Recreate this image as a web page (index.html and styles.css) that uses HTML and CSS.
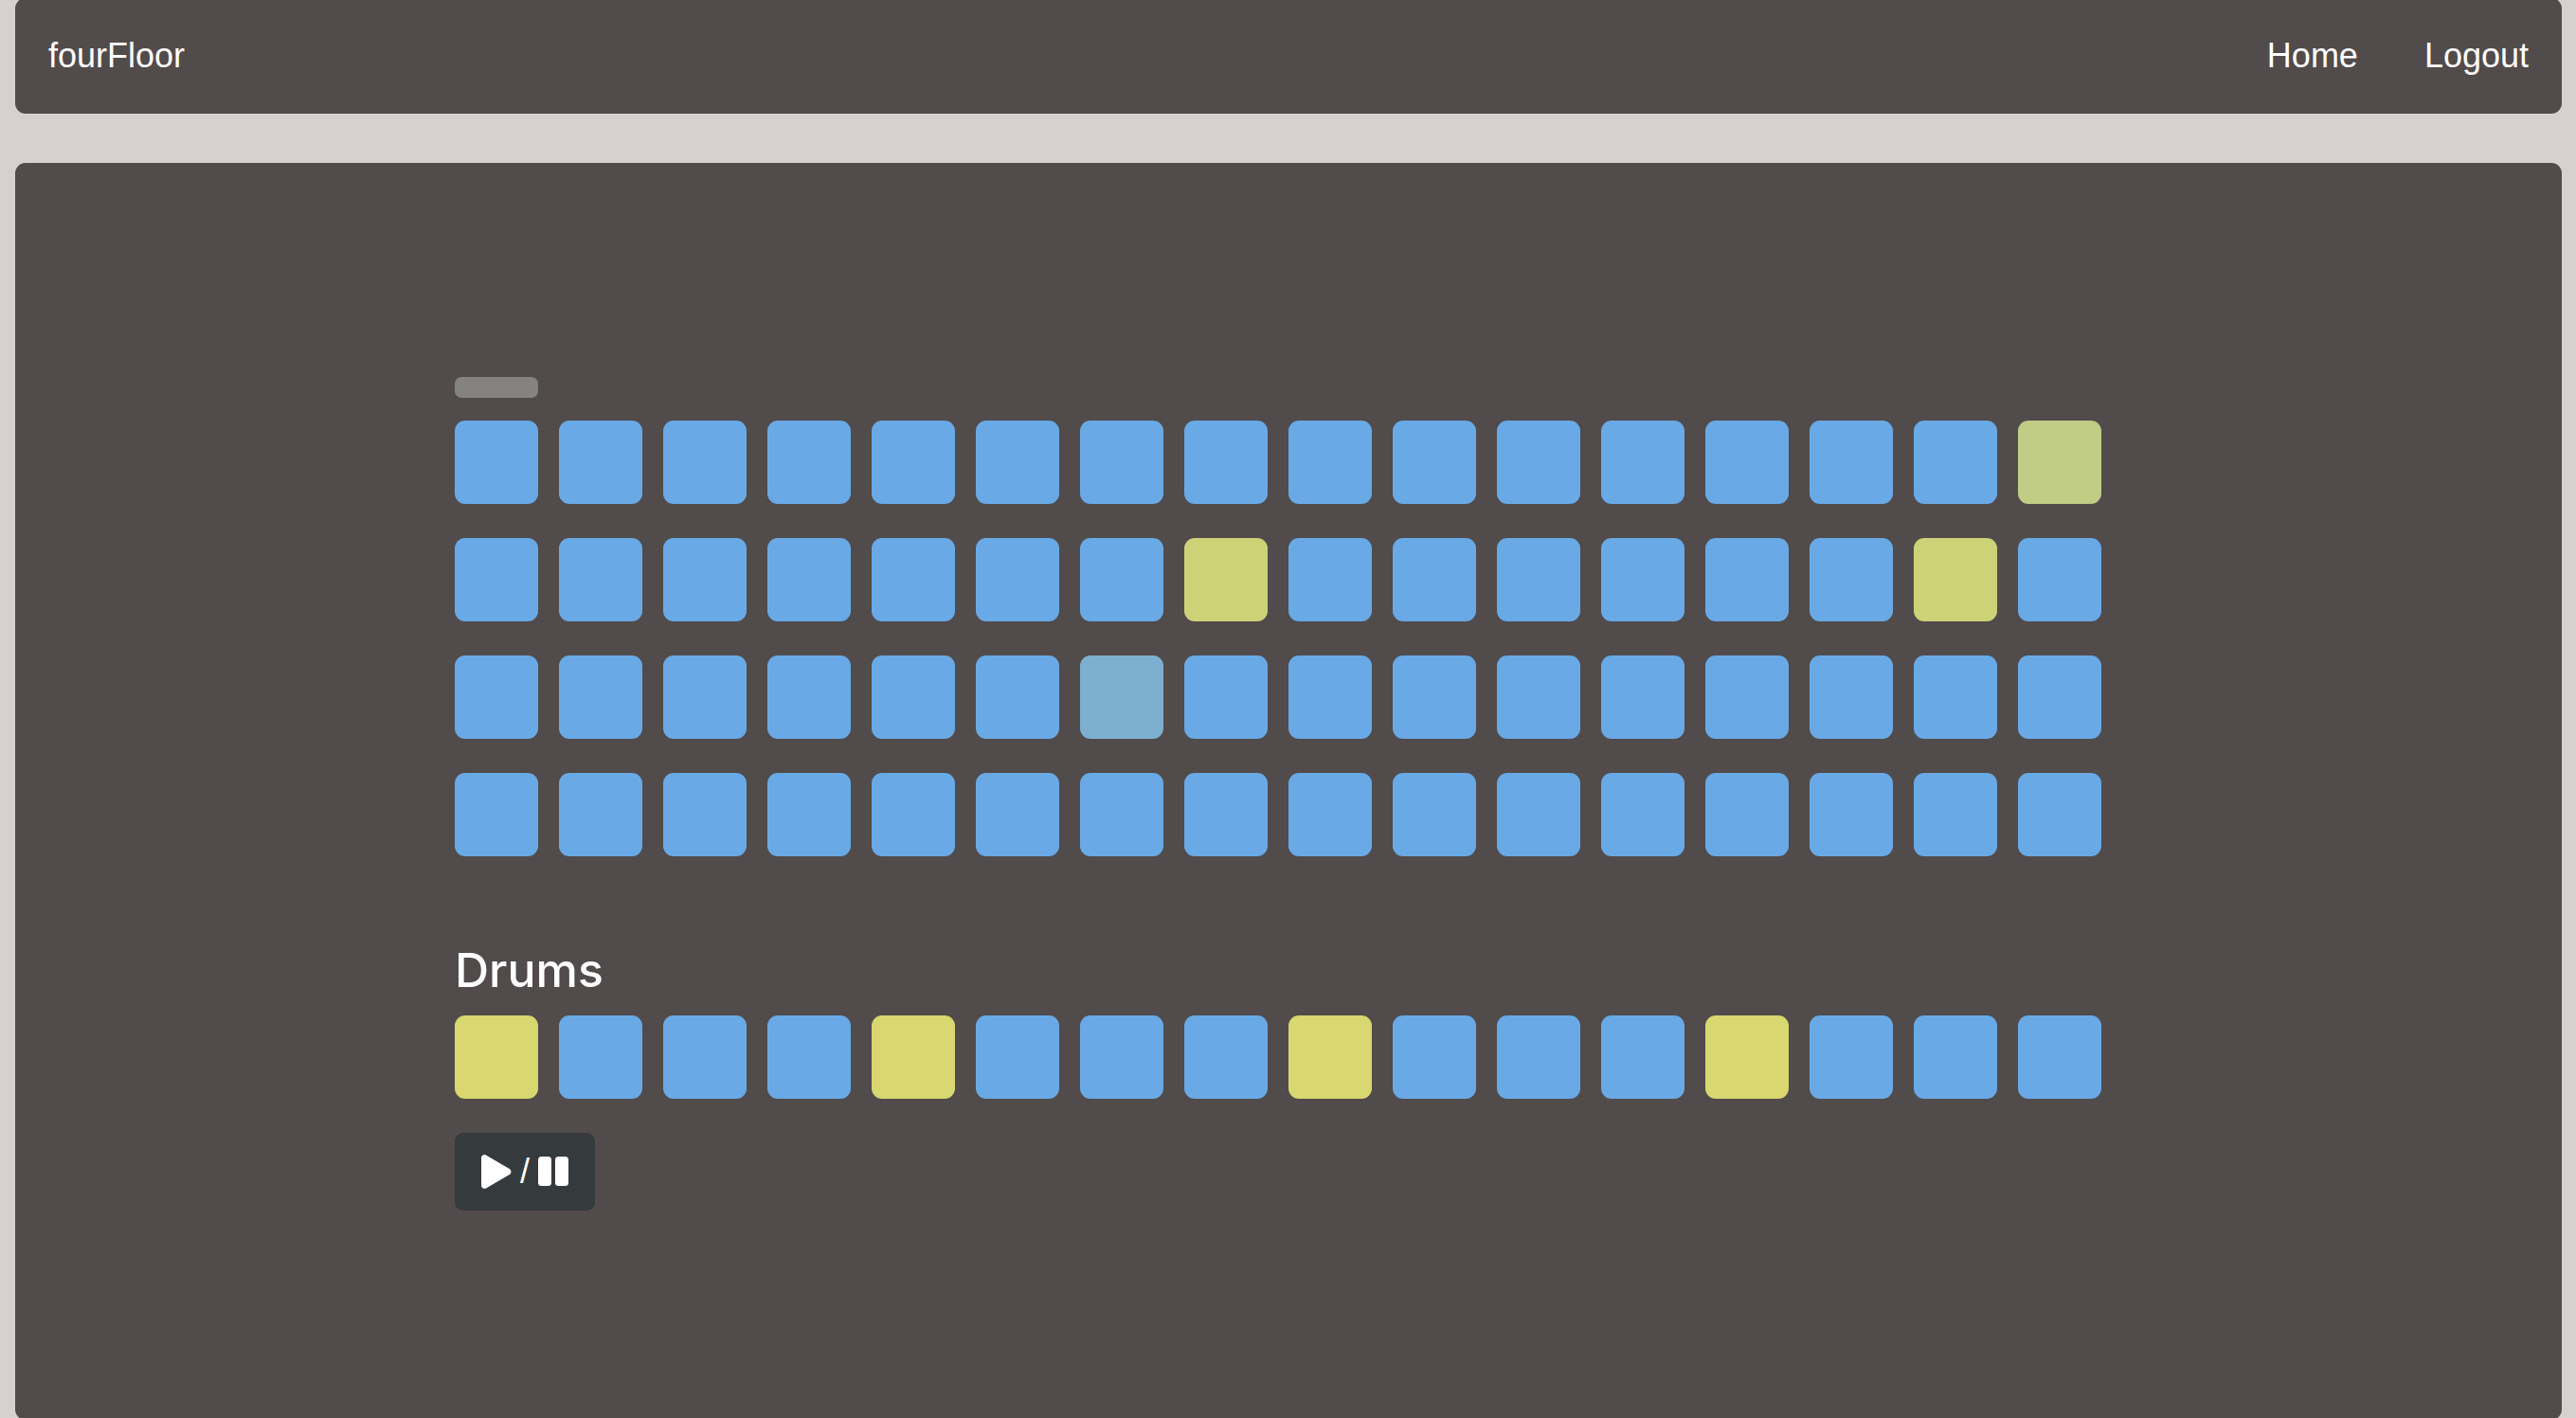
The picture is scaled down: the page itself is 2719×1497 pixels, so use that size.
FILE: index.html
```html
<!DOCTYPE html>
<html lang="en">
<head>
<meta charset="utf-8">
<meta name="viewport" content="width=device-width, initial-scale=1">
<title>fourFloor</title>
<link rel="stylesheet" href="styles.css">
</head>
<body>
<div class="page">
  <nav class="navbar">
    <a class="navbar-link" href="#">fourFloor</a>
    <div class="navbar-menu">
      <a class="navbar-link" href="#">Home</a>
      <a class="navbar-link" href="#">Logout</a>
    </div>
  </nav>
  <main class="panel">
    <div class="sequencer">
      <div class="row playhead"><span class="playhead-mark"></span></div>
      <div class="tracks">
        <div class="row" role="group" aria-label="Track 1">
          <button class="pad" aria-label="Step 1"></button>
          <button class="pad" aria-label="Step 2"></button>
          <button class="pad" aria-label="Step 3"></button>
          <button class="pad" aria-label="Step 4"></button>
          <button class="pad" aria-label="Step 5"></button>
          <button class="pad" aria-label="Step 6"></button>
          <button class="pad" aria-label="Step 7"></button>
          <button class="pad" aria-label="Step 8"></button>
          <button class="pad" aria-label="Step 9"></button>
          <button class="pad" aria-label="Step 10"></button>
          <button class="pad" aria-label="Step 11"></button>
          <button class="pad" aria-label="Step 12"></button>
          <button class="pad" aria-label="Step 13"></button>
          <button class="pad" aria-label="Step 14"></button>
          <button class="pad" aria-label="Step 15"></button>
          <button class="pad level-2" aria-label="Step 16" aria-pressed="true"></button>
        </div>
        <div class="row" role="group" aria-label="Track 2">
          <button class="pad" aria-label="Step 1"></button>
          <button class="pad" aria-label="Step 2"></button>
          <button class="pad" aria-label="Step 3"></button>
          <button class="pad" aria-label="Step 4"></button>
          <button class="pad" aria-label="Step 5"></button>
          <button class="pad" aria-label="Step 6"></button>
          <button class="pad" aria-label="Step 7"></button>
          <button class="pad level-3" aria-label="Step 8" aria-pressed="true"></button>
          <button class="pad" aria-label="Step 9"></button>
          <button class="pad" aria-label="Step 10"></button>
          <button class="pad" aria-label="Step 11"></button>
          <button class="pad" aria-label="Step 12"></button>
          <button class="pad" aria-label="Step 13"></button>
          <button class="pad" aria-label="Step 14"></button>
          <button class="pad level-3" aria-label="Step 15" aria-pressed="true"></button>
          <button class="pad" aria-label="Step 16"></button>
        </div>
        <div class="row" role="group" aria-label="Track 3">
          <button class="pad" aria-label="Step 1"></button>
          <button class="pad" aria-label="Step 2"></button>
          <button class="pad" aria-label="Step 3"></button>
          <button class="pad" aria-label="Step 4"></button>
          <button class="pad" aria-label="Step 5"></button>
          <button class="pad" aria-label="Step 6"></button>
          <button class="pad level-1" aria-label="Step 7" aria-pressed="true"></button>
          <button class="pad" aria-label="Step 8"></button>
          <button class="pad" aria-label="Step 9"></button>
          <button class="pad" aria-label="Step 10"></button>
          <button class="pad" aria-label="Step 11"></button>
          <button class="pad" aria-label="Step 12"></button>
          <button class="pad" aria-label="Step 13"></button>
          <button class="pad" aria-label="Step 14"></button>
          <button class="pad" aria-label="Step 15"></button>
          <button class="pad" aria-label="Step 16"></button>
        </div>
        <div class="row" role="group" aria-label="Track 4">
          <button class="pad" aria-label="Step 1"></button>
          <button class="pad" aria-label="Step 2"></button>
          <button class="pad" aria-label="Step 3"></button>
          <button class="pad" aria-label="Step 4"></button>
          <button class="pad" aria-label="Step 5"></button>
          <button class="pad" aria-label="Step 6"></button>
          <button class="pad" aria-label="Step 7"></button>
          <button class="pad" aria-label="Step 8"></button>
          <button class="pad" aria-label="Step 9"></button>
          <button class="pad" aria-label="Step 10"></button>
          <button class="pad" aria-label="Step 11"></button>
          <button class="pad" aria-label="Step 12"></button>
          <button class="pad" aria-label="Step 13"></button>
          <button class="pad" aria-label="Step 14"></button>
          <button class="pad" aria-label="Step 15"></button>
          <button class="pad" aria-label="Step 16"></button>
        </div>
      </div>
      <h2 class="section-title">Drums</h2>
      <div class="row" role="group" aria-label="Drums">
        <button class="pad level-4" aria-label="Step 1" aria-pressed="true"></button>
        <button class="pad" aria-label="Step 2"></button>
        <button class="pad" aria-label="Step 3"></button>
        <button class="pad" aria-label="Step 4"></button>
        <button class="pad level-4" aria-label="Step 5" aria-pressed="true"></button>
        <button class="pad" aria-label="Step 6"></button>
        <button class="pad" aria-label="Step 7"></button>
        <button class="pad" aria-label="Step 8"></button>
        <button class="pad level-4" aria-label="Step 9" aria-pressed="true"></button>
        <button class="pad" aria-label="Step 10"></button>
        <button class="pad" aria-label="Step 11"></button>
        <button class="pad" aria-label="Step 12"></button>
        <button class="pad level-4" aria-label="Step 13" aria-pressed="true"></button>
        <button class="pad" aria-label="Step 14"></button>
        <button class="pad" aria-label="Step 15"></button>
        <button class="pad" aria-label="Step 16"></button>
      </div>
      <button class="transport" aria-label="Play / Pause">
        <svg width="32" height="36" viewBox="0 0 32 36" aria-hidden="true"><path fill="currentColor" d="M0 3.4C0 .8 2.800-.800 5 .5L29.800 15C32 16.300 32 19.700 29.800 21L5 35.500C2.800 36.800 0 35.200 0 32.600Z"/></svg>
        <span>/</span>
        <svg width="32" height="36" viewBox="0 0 32 36" aria-hidden="true"><g fill="currentColor"><rect y="2" width="14" height="31" rx="3.500"/><rect x="18" y="2" width="14" height="31" rx="3.500"/></g></svg>
      </button>
    </div>
  </main>
</div>
</body>
</html>
```

FILE: styles.css
```css
* {
  box-sizing: border-box;
}

body {
  margin: 0;
  overflow: hidden;
  background: #d6d0d0;
  color: #fff;
  font-family: "Liberation Sans", Arial, sans-serif;
  font-size: 36px;
  line-height: 44px;
}

.page {
  display: flex;
  flex-direction: column;
  gap: 52px;
  min-height: calc(100vh + 4px);
  margin-top: -2px;
  padding: 0 15px 0 16px;
}

.navbar {
  display: flex;
  justify-content: space-between;
  align-items: center;
  padding: 39px 35px;
  border-radius: 11px;
  background: #514b4b;
}

.navbar-menu {
  display: flex;
  gap: 70px;
}

.navbar-link {
  color: inherit;
  text-decoration: none;
}

.panel {
  flex: 1;
  padding: 226px 32px 64px;
  border-radius: 11px;
  background: #514b4b;
}

.sequencer {
  max-width: 1760px;
  margin: 0 auto;
  padding-right: 22px;
}

.row {
  display: grid;
  grid-template-columns: repeat(16, 1fr);
  gap: 22px;
}

.playhead {
  margin-bottom: 24px;
}

.playhead-mark {
  height: 22px;
  border-radius: 7px;
  background: #858282;
}

.tracks {
  display: grid;
  gap: 36px;
}

.pad {
  aspect-ratio: 1;
  padding: 0;
  border: 0;
  border-radius: 11px;
  background: #69aae6;
}

.level-1 {
  background: #7db0d0;
}

.level-2 {
  background: #c1cc85;
}

.level-3 {
  background: #ced277;
}

.level-4 {
  background: #d8d770;
}

.section-title {
  margin: 88px 0 16px;
  font-family: Inter, "Liberation Sans", sans-serif;
  font-size: 50px;
  font-weight: 500;
  line-height: 64px;
}

.transport {
  display: flex;
  align-items: center;
  gap: 9px;
  margin-top: 36px;
  padding: 19px 28px;
  border: 0;
  border-radius: 9px;
  background: #353a3d;
  color: inherit;
  font: inherit;
}
```
